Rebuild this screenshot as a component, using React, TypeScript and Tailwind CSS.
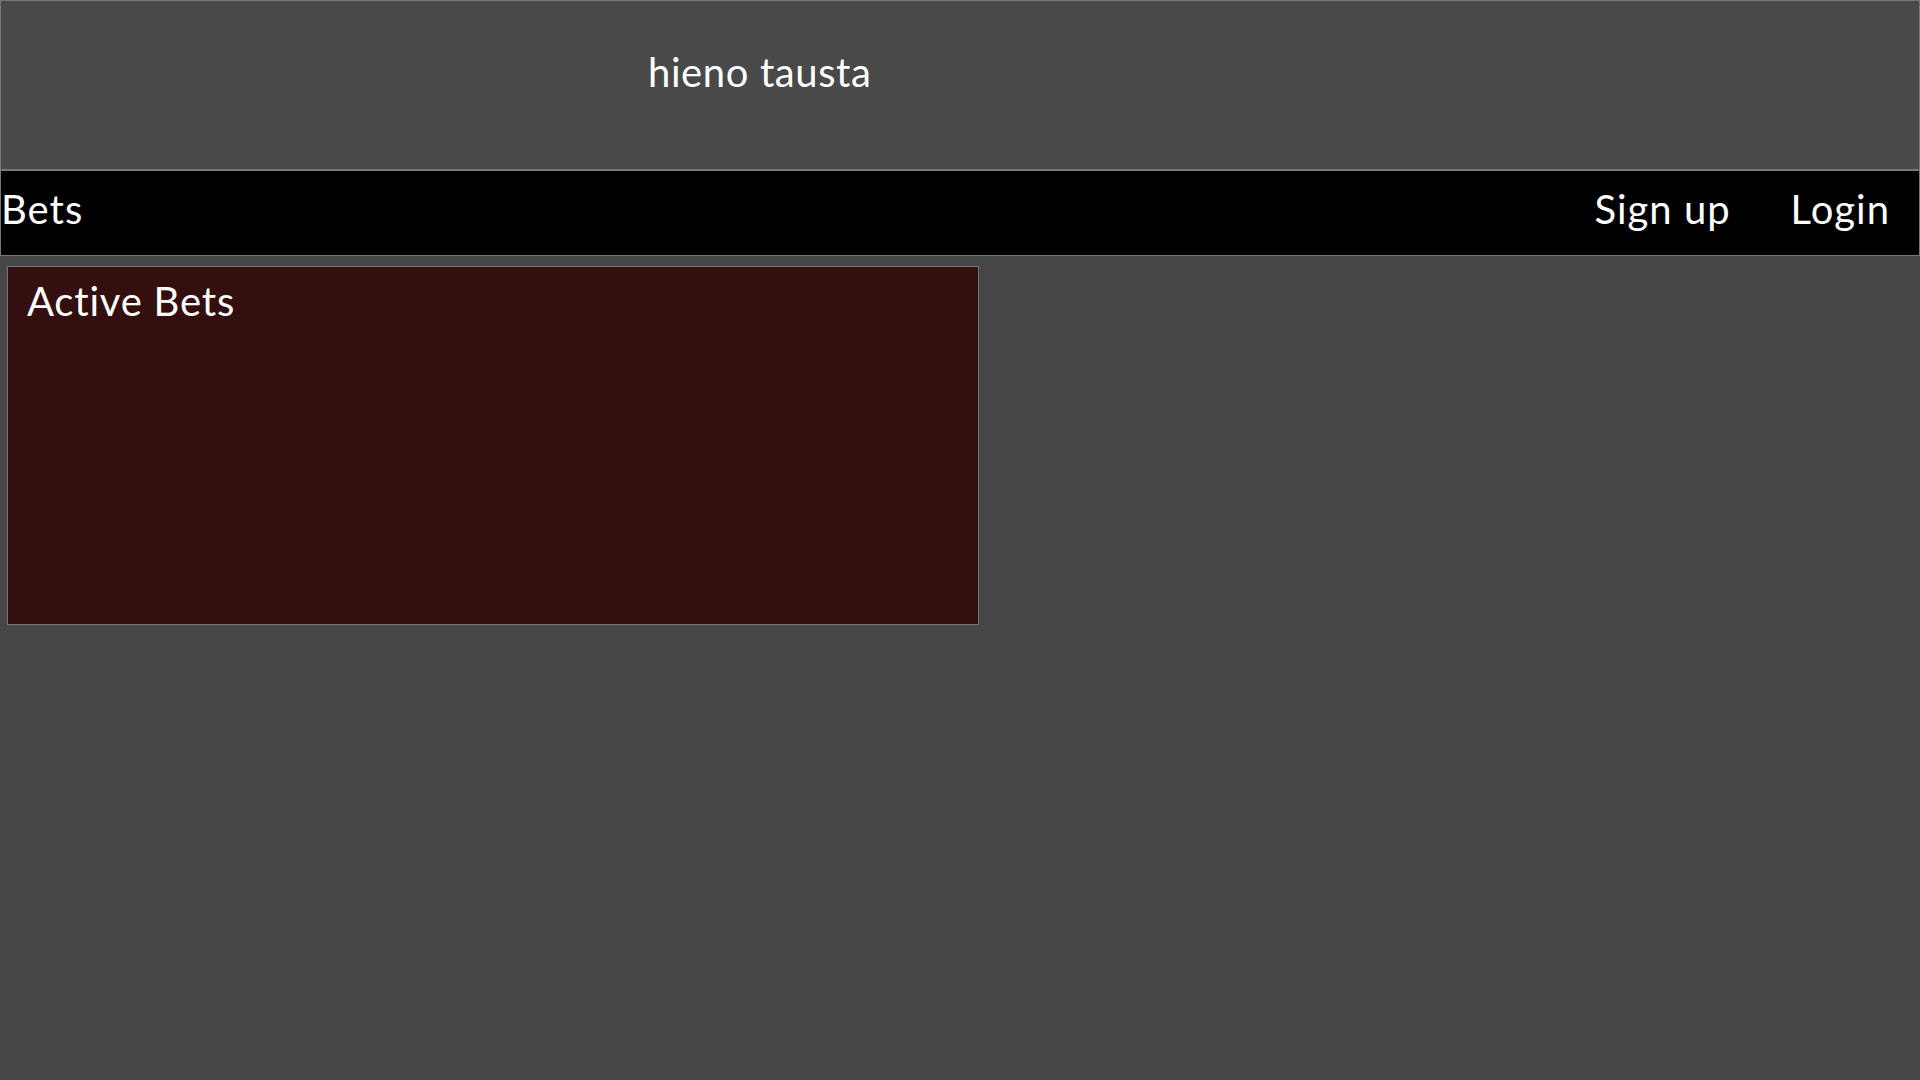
export default function App() {
  return (
    <div
      className="min-h-screen bg-[#464646] text-white"
      style={{ fontFamily: "Lato, 'Noto Sans', sans-serif" }}
    >
      <header className="h-[170px] border border-[#777777] bg-[#494949] pt-[51px] pl-[647px]">
        <h1 className="text-[40px] leading-none font-normal tracking-[0.6px]">hieno tausta</h1>
      </header>
      <nav className="flex h-[86px] items-start justify-between border border-[#777777] bg-black pt-[18px] text-[40px] leading-none tracking-[1px]">
        <a className="block">Bets</a>
        <div className="flex gap-[60px] pr-[29px]">
          <a className="block">Sign up</a>
          <a className="block">Login</a>
        </div>
      </nav>
      <main className="pt-[10px] pl-[7px]">
        <section className="h-[359px] w-[972px] border border-[#777777] bg-[#330f10] pt-[14px] pl-[19px]">
          <h2 className="text-[40px] leading-none font-normal tracking-[0.8px]">Active Bets</h2>
        </section>
      </main>
    </div>
  );
}
